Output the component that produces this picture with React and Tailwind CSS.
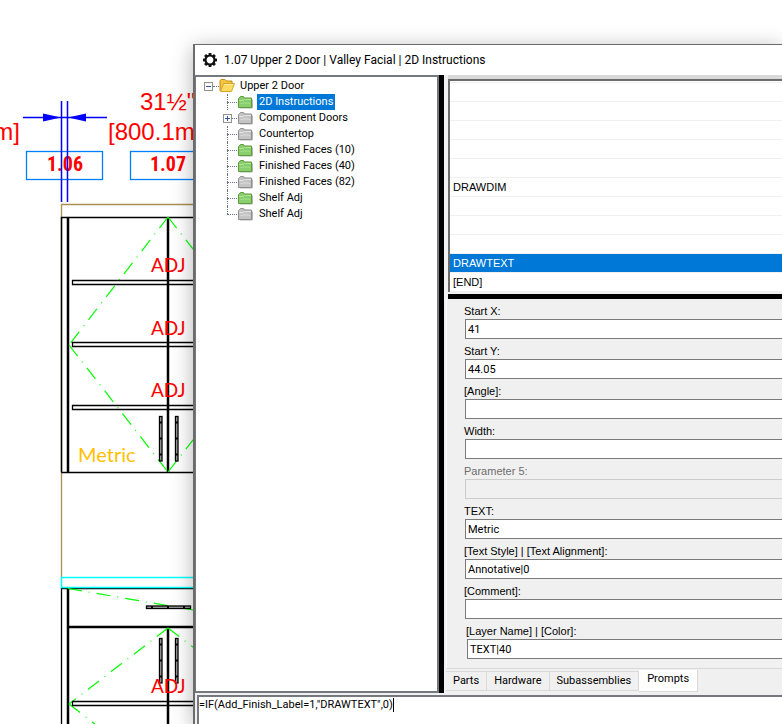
import React, { useState } from "react";

const treeItems = [
  { name: "2D Instructions", green: true },
  { name: "Component Doors", green: false, expandable: true },
  { name: "Countertop", green: false },
  { name: "Finished Faces (10)", green: true },
  { name: "Finished Faces (40)", green: true },
  { name: "Finished Faces (82)", green: false },
  { name: "Shelf Adj", green: true },
  { name: "Shelf Adj", green: false },
];

const instructions = ["", "", "", "", "", "DRAWDIM", "", "", "", "DRAWTEXT", "[END]"];

const prompts = [
  { id: "startX", label: "Start X:", value: "41" },
  { id: "startY", label: "Start Y:", value: "44.05" },
  { id: "angle", label: "[Angle]:", value: "" },
  { id: "width", label: "Width:", value: "" },
  { id: "param5", label: "Parameter 5:", value: "", disabled: true },
  { id: "text", label: "TEXT:", value: "Metric" },
  { id: "style", label: "[Text Style] | [Text Alignment]:", value: "Annotative|0" },
  { id: "comment", label: "[Comment]:", value: "" },
  { id: "layer", label: "[Layer Name] | [Color]:", value: "TEXT|40", indent: true },
];

const tabs = ["Parts", "Hardware", "Subassemblies", "Prompts"];

const Gear = () => (
  <svg className="h-4 w-4" viewBox="-8 -8 16 16" stroke="#111" fill="none">
    <circle r="4.5" strokeWidth="2.2" />
    {[0, 45, 90, 135, 180, 225, 270, 315].map((a) => (
      <path key={a} d="M0 -4.5V-7" strokeWidth="2.8" transform={`rotate(${a})`} />
    ))}
  </svg>
);

const Folder = ({ green }) => (
  <svg className="h-4 w-4 shrink-0" viewBox="0 0 16 16">
    <path d="M3 14h12.500V5.500" fill="none" stroke="#b5b5b5" />
    <path
      d="M1.500 13.500V4.500l1-1H3l.5-1h3l1 1.500h7v9.500z"
      fill={green ? "#86cf6c" : "#c4c4c4"}
      stroke={green ? "#5f9a3c" : "#8f8f8f"}
    />
    <path d="M2.500 6.500h4l1-1H14" stroke={green ? "#b5e59d" : "#e6e6e6"} fill="none" />
    <path d="M3 10c3-1.500 7-1.500 10 0" stroke={green ? "#a9e08f" : "#dcdcdc"} fill="none" />
  </svg>
);

const OpenFolder = () => (
  <svg className="h-4 w-4 shrink-0" viewBox="0 0 16 16">
    <path d="M1 13V2.500l1-1h4l1.500 1.500H13v3" fill="#f3c63c" stroke="#c48a1c" />
    <path d="M1.500 13.500l3-8h11l-3 8z" fill="#ffdc60" stroke="#d9a32c" />
    <path d="M5.500 6.500h8.500" stroke="#fff0a8" />
  </svg>
);

const Expander = ({ open }) => (
  <svg className="h-[9px] w-[9px] shrink-0" viewBox="0 0 9 9">
    <rect x=".5" y=".5" width="8" height="8" fill="#fafafa" stroke="#919191" />
    <path d={open ? "M2 4.500h5" : "M2 4.500h5M4.500 2v5"} stroke="#34559b" />
  </svg>
);

// vertical door pull
const Pull = ({ x, y }) => (
  <g fill="#aaa" stroke="#000" strokeWidth="1.3">
    <rect x={x} y={y} width="2.500" height="44.500" />
    <path d={`M${x} ${y + 6}h2.500M${x} ${y + 22}h2.500M${x} ${y + 38}h2.500`} strokeWidth="2" />
  </g>
);

const Drawing = () => (
  <svg className="h-[724px] w-[240px]" viewBox="0 0 240 724" fill="none">
    {/* cabinet outlines */}
    <path d="M61.500 577V204.500H240" stroke="#a98f52" strokeWidth="1.300" />
    <path d="M61.500 472.500V217.500H240M61.500 472.500H240" stroke="#000" strokeWidth="1.500" />
    <path d="M68 217V472M168 217V472" stroke="#000" strokeWidth="2.500" />
    <path d="M61.500 724V588.500H240" stroke="#000" strokeWidth="1.300" />
    <path d="M68 588V724M68 627H240M168 627V724" stroke="#000" strokeWidth="2.500" />
    <path d="M240 577.500H61.500V587.500H240" stroke="#0ff" strokeWidth="1.500" />
    {/* door swings */}
    <g stroke="#0f0" strokeDasharray="14 7 1 7" strokeWidth="1.200">
      <path d="M168 217L69 345" />
      <path d="M69 345L168 472" />
      <path d="M168 217L240 309" />
      <path d="M168 472L240 380" />
      <path d="M68 588.500L240 618" />
      <path d="M168 628L69 704" />
      <path d="M168 628L240 683" />
      <path d="M69 704L100 728" />
    </g>
    {/* shelves */}
    <g stroke="#000" strokeWidth="1.300">
      <path d="M240 280.500H72.500V284.500H240" />
      <path d="M240 342.500H72.500V346.500H240" />
      <path d="M240 405.500H72.500V409.500H240" />
      <path d="M240 701.500H72.500V705.500H240" />
    </g>
    <Pull x={159.5} y={416.5} />
    <Pull x={175.5} y={416.5} />
    <Pull x={159.5} y={638.5} />
    <Pull x={175.5} y={638.5} />
    <rect x="146.500" y="606" width="44" height="2.500" fill="#aaa" stroke="#000" strokeWidth="1.300" />
    <path d="M152 606v2.500M168 606v2.500M184 606v2.500" stroke="#000" strokeWidth="2" />
    {/* labels */}
    <g stroke="#0080ff" strokeWidth="1.300">
      <rect x="26.500" y="151.500" width="76" height="28" />
      <rect x="130.500" y="151.500" width="76" height="28" />
    </g>
    <g className="font-['Liberation_Sans_Narrow','Roboto_Condensed','Liberation_Sans',sans-serif] text-[20px] font-bold" fill="#f00" textAnchor="middle">
      <text x="65" y="171">1.06</text>
      <text x="168" y="171">1.07</text>
    </g>
    {/* dimension */}
    <path d="M61.500 101V202M67.500 101V202" stroke="#0000ff" strokeWidth="1.500" />
    <path d="M23 117.500H107" stroke="#0000ff" strokeWidth="1.300" />
    <path d="M61 117.500L43 113.500V121.500zM68 117.500L86 113.500V121.500z" fill="#0000ff" />
    <g className="font-['Liberation_Sans',Arial,sans-serif] text-[24px]" fill="#f00">
      <text x="140" y="110">31½"</text>
      <text x="108" y="140">[800.1mm]</text>
      <text x="20" y="140" textAnchor="end">m]</text>
    </g>
    <g className="font-[Lato,sans-serif] text-[19px]" fill="#f00">
      <text x="151" y="272">ADJ</text>
      <text x="151" y="335">ADJ</text>
      <text x="151" y="397">ADJ</text>
      <text x="151" y="693">ADJ</text>
    </g>
    <text className="font-[Lato,sans-serif] text-[20px]" x="78" y="462" fill="#ffc000">Metric</text>
  </svg>
);

const Tree = () => {
  const [selected, setSelected] = useState(0);
  return (
    <div className="w-[244px] shrink-0 border-2 border-l border-[#75787f] bg-white pt-px pl-2 text-[11px] leading-4">
      <div className="flex h-4 items-center">
        <Expander open />
        <div className="w-1.5 border-t border-dotted border-gray-500"></div>
        <OpenFolder />
        <span className="ml-[5px]">Upper 2 Door</span>
      </div>
      <ul>
        {treeItems.map((item, index) => (
          <li key={index} className="flex h-4 items-center pl-[19px]">
            <div className="flex h-4 w-3.5 shrink-0 items-center">
              {item.expandable ? (
                <Expander />
              ) : (
                <div className="h-4 w-[9px] shrink-0 pl-1">
                  <div
                    className={`w-[5px] border-l border-dotted border-gray-500 ${
                      index === treeItems.length - 1 ? "h-2" : "h-4"
                    }`}
                  ></div>
                </div>
              )}
              <div
                className={`border-t border-dotted border-gray-500 ${
                  item.expandable ? "w-[5px]" : "-ml-[5px] w-2.5"
                }`}
              ></div>
            </div>
            <Folder green={item.green} />
            <button
              onClick={() => setSelected(index)}
              className={`ml-1 h-4 px-0.5 whitespace-nowrap ${
                selected === index ? "bg-[#0078d7] text-white" : ""
              }`}
            >
              {item.name}
            </button>
          </li>
        ))}
      </ul>
    </div>
  );
};

const InstructionList = () => {
  const [selected, setSelected] = useState(9);
  return (
    <div className="ml-1 border-t-4 border-b-2 border-t-[#d9d9d9] border-b-[#f0f0f0] bg-white">
      <div className="border-t-2 border-l-2 border-[#6b6b6b] pt-px font-['Liberation_Sans',Arial,sans-serif] text-[11px]">
        <ul className="border-t border-[#f0f0f0]">
          {instructions.map((text, index) => (
            <li key={index} className="h-[19px] border-b border-[#f0f0f0]">
              <button
                onClick={() => setSelected(index)}
                className={`block h-[18px] w-full px-[3px] text-left leading-[18px] ${
                  selected === index ? "bg-[#0078d7] text-white" : ""
                }`}
              >
                {text}
              </button>
            </li>
          ))}
        </ul>
      </div>
    </div>
  );
};

const PromptForm = () => (
  <form className="ml-0.5 flex flex-1 flex-col gap-1 border-b border-l border-b-[#d9d9d9] border-l-white pt-1 pl-[18px]">
    {prompts.map((p) => (
      <div key={p.id} className={p.indent ? "pl-0.5" : ""}>
        <label
          htmlFor={p.id}
          className={`-ml-px block h-4 font-['Liberation_Sans',Arial,sans-serif] text-[11px] leading-4 ${
            p.disabled ? "text-[#6d6d6d]" : ""
          }`}
        >
          {p.label}
        </label>
        <input
          id={p.id}
          defaultValue={p.value}
          disabled={p.disabled}
          className="block h-5 w-full border border-r-0 border-[#7a7a7a] bg-white px-0.5 text-[11px] outline-none disabled:border-[#cccccc] disabled:bg-[#f0f0f0]"
        />
      </div>
    ))}
  </form>
);

const Tabs = () => {
  const [active, setActive] = useState("Prompts");
  return (
    <div className="mt-px flex h-[23px] items-start pl-0.5 text-[11px]">
      {tabs.map((tab) => (
        <button
          key={tab}
          onClick={() => setActive(tab)}
          className={
            active === tab
              ? "h-[22px] border-r border-b border-[#d9d9d9] bg-white px-2 pb-0.5"
              : "mt-px h-5 border-t border-r border-b border-[#d9d9d9] px-[7px]"
          }
        >
          {tab}
        </button>
      ))}
    </div>
  );
};

const Formula = () => (
  <div className="flex h-[29px] shrink-0 items-start border-t-2 border-l-2 border-[#75787f] bg-white">
    <input
      aria-label="Formula"
      defaultValue={'=IF(Add_Finish_Label=1,"DRAWTEXT",0)'}
      className="field-sizing-content h-4 text-[11px] caret-transparent outline-none"
    />
    <div className="mt-px h-3.5 w-px bg-black"></div>
  </div>
);

const App = () => {
  return (
    <div className="relative h-screen overflow-hidden bg-white font-[Roboto,sans-serif] text-black">
      <Drawing />
      <div className="absolute top-11 right-0 bottom-0 left-[193px] flex flex-col border-t border-l-2 border-[#6b6b6b] bg-[#f0f0f0] shadow-[0_4px_20px_rgba(0,0,0,0.3)]">
        <div className="flex h-[30px] shrink-0 items-center gap-1.5 bg-white pl-[7px]">
          <Gear />
          <h1 className="text-[12px] whitespace-nowrap">
            1.07 Upper 2 Door | Valley Facial | 2D Instructions
          </h1>
        </div>
        <div className="flex min-h-0 flex-1">
          <Tree />
          <div className="w-[5px] shrink-0 bg-black"></div>
          <div className="flex min-w-0 flex-1 flex-col">
            <InstructionList />
            <div className="ml-1 h-[5px] shrink-0 bg-black"></div>
            <PromptForm />
            <Tabs />
          </div>
        </div>
        <div className="shrink-0 pt-0.5 pl-0.5">
          <Formula />
        </div>
      </div>
    </div>
  );
};

export default App;
